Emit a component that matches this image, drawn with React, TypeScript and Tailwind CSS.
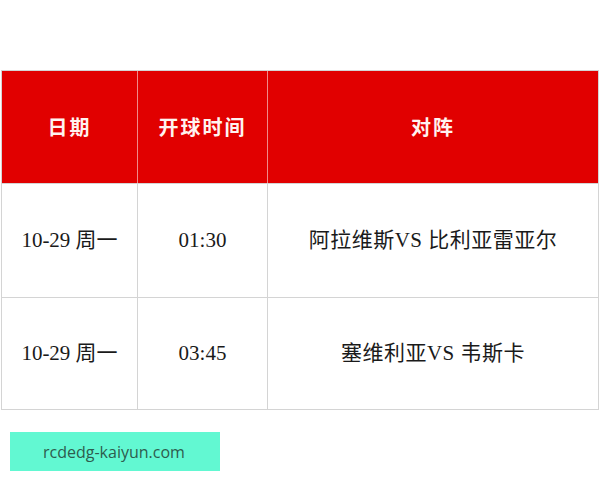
const rows = [
  { date: "10-29 周一", time: "01:30", match: "阿拉维斯VS 比利亚雷亚尔", h: "h-[114px]" },
  { date: "10-29 周一", time: "03:45", match: "塞维利亚VS 韦斯卡", h: "h-[112px]" },
];

const serif = "font-['Liberation_Serif','Noto_Sans_CJK_SC',serif]";

export default function App() {
  return (
    <div className="h-[480px] w-[600px] overflow-hidden bg-white pt-[70px]">
      <div className="ml-[1px] w-[598px] border border-[#d4d4d4]">
        <div className="grid h-[112px] grid-cols-[136px_130px_1fr] bg-[#e10000] font-['Noto_Sans_CJK_SC',sans-serif] text-[20px] font-bold tracking-[2px] text-[#fff3f0]">
          <div className="flex items-center justify-center border-r border-[#f08a8a]">日期</div>
          <div className="flex items-center justify-center border-r border-[#f08a8a]">开球时间</div>
          <div className="flex items-center justify-center">对阵</div>
        </div>
        {rows.map((r, i) => (
          <div
            key={i}
            className={`grid ${r.h} grid-cols-[136px_130px_1fr] border-t border-[#d4d4d4] ${serif} text-[21px] text-[#1a1a1a]`}
          >
            <div className="flex items-center justify-center border-r border-[#d4d4d4]">{r.date}</div>
            <div className="flex items-center justify-center border-r border-[#d4d4d4]">{r.time}</div>
            <div className="flex items-center justify-center tracking-[0.5px]">{r.match}</div>
          </div>
        ))}
      </div>
      <div className="ml-[10px] mt-[22px] flex h-[39px] w-[210px] items-center pl-[33px] font-['Open_Sans',sans-serif] text-[16px] text-[#2e5c4e] bg-[#62f8d2]">
        rcdedg-kaiyun.com
      </div>
    </div>
  );
}
